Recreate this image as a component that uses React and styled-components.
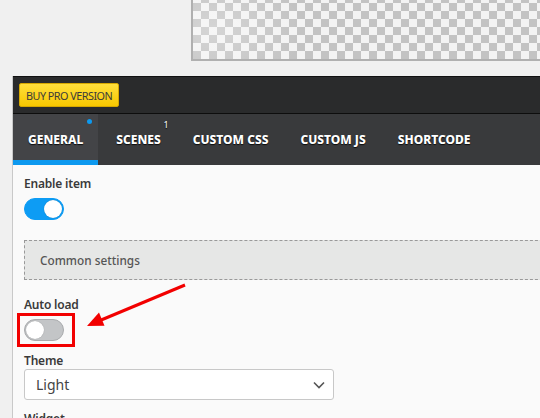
import React from "react";
import styled, { createGlobalStyle } from "styled-components";

const Global = createGlobalStyle`
  html, body { margin: 0; padding: 0; }
  body {
    background: #f0f0f0;
    width: 540px;
    height: 418px;
    overflow: hidden;
    font-family: "Noto Sans", "Open Sans", sans-serif;
    position: relative;
  }
`;

const Preview = styled.div`
  margin-left: 191px;
  width: 360px;
  height: 59px;
  border-left: 2px solid #b0b0b0;
  border-bottom: 2px solid #b0b0b0;
  background:
    radial-gradient(ellipse 90px 60px at 20px 30px, rgba(255,255,255,0.3), rgba(255,255,255,0)),
    repeating-conic-gradient(#c3c3c3 0 25%, #f3f3f3 0 50%) 0 -5px / 16px 16px;
`;

const Panel = styled.div`
  margin-top: 15px;
  margin-left: 12px;
  width: 560px;
  border-left: 1px solid #c9c9c9;
  background: #fafafa;
  min-height: 400px;
`;

const TopBar = styled.div`
  height: 36px;
  background: #2a2b2c;
  border-top: 1px solid #111;
  border-bottom: 1px solid #0d0d0d;
  display: flex;
  align-items: center;
  padding-left: 6px;
`;

const BuyButton = styled.button`
  height: 24px;
  padding: 0 6px;
  border: 1px solid #d7a900;
  border-radius: 2px;
  background: linear-gradient(to bottom, #ffdf3c, #f8c800);
  color: #3a3a3a;
  font-family: "Noto Sans", "Open Sans", sans-serif;
  font-size: 10.8px;
  letter-spacing: -0.5px;
  cursor: pointer;
`;

const TabBar = styled.div`
  height: 51px;
  background: #393a3c;
  display: flex;
  align-items: stretch;
`;

const Tab = styled.div`
  position: relative;
  display: flex;
  align-items: center;
  padding: 0 ${(p) => (p.$active ? "15px" : "16px")};
  margin-right: ${(p) => (p.$active ? "2px" : "0")};
  background: ${(p) => (p.$active ? "#434447" : "transparent")};
  border-bottom: 5px solid ${(p) => (p.$active ? "#0d99ef" : "transparent")};
  box-sizing: border-box;
  padding-top: 5px;
  color: #fff;
  font-family: "Noto Sans", "Open Sans", sans-serif;
  font-weight: 800;
  font-size: 12px;
  letter-spacing: 0;
  text-shadow: 0 1px 1px rgba(0,0,0,0.8);
`;

const Dot = styled.span`
  position: absolute;
  top: 5px;
  right: 6px;
  width: 5px;
  height: 5px;
  border-radius: 50%;
  background: #0d99ef;
`;

const Count = styled.span`
  position: absolute;
  top: 4px;
  right: 8px;
  font-size: 9px;
  font-weight: 400;
  color: #fff;
`;

const Content = styled.div`
  padding: 11px 0 0 11px;
`;

const Label = styled.div`
  font-size: 12px;
  font-weight: 600;
  color: #3a3a3a;
  line-height: 16px;
  letter-spacing: -0.2px;
  margin-bottom: ${(p) => p.$gap || 0}px;
`;

const ToggleWrap = styled.div`
  position: relative;
  width: 40px;
  margin-bottom: ${(p) => p.$gap || 0}px;
`;

const Toggle = styled.div`
  width: 40px;
  height: 22px;
  border-radius: 11px;
  box-sizing: border-box;
  background: ${(p) => (p.$on ? "#0d9cf4" : "#c3c5c7")};
  border: 1px solid ${(p) => (p.$on ? "#0d9cf4" : "#a9abad")};
  display: flex;
  align-items: center;
  justify-content: ${(p) => (p.$on ? "flex-end" : "flex-start")};
  padding: 0 1px;
`;

const Knob = styled.div`
  width: 18px;
  height: 18px;
  border-radius: 50%;
  background: #fff;
  box-shadow: 0 0 1px rgba(0,0,0,0.3);
`;

const Highlight = styled.span`
  position: absolute;
  left: -7px;
  top: -6px;
  width: 58px;
  height: 34px;
  box-sizing: border-box;
  border: 3px solid #f20000;
`;

const Section = styled.div`
  height: 40px;
  box-sizing: border-box;
  border: 1px dashed #999;
  border-right: none;
  background: #e6e7e6;
  display: flex;
  align-items: center;
  padding-left: 15px;
  font-size: 11.8px;
  font-weight: 500;
  color: #555;
  margin-bottom: 17px;
`;

const Select = styled.div`
  width: 310px;
  height: 31px;
  box-sizing: border-box;
  border: 1px solid #c8c8c8;
  border-radius: 3px;
  background: #fff;
  display: flex;
  align-items: center;
  justify-content: space-between;
  padding: 0 8px 0 11px;
  font-size: 14px;
  color: #444;
  margin-bottom: 11px;
`;

const Arrow = styled.svg`
  position: absolute;
  left: 0;
  top: 0;
  pointer-events: none;
`;

export default function App() {
  return (
    <>
      <Global />
      <Preview />
      <Panel>
        <TopBar>
          <BuyButton>BUY PRO VERSION</BuyButton>
        </TopBar>
        <TabBar>
          <Tab $active>
            GENERAL
            <Dot />
          </Tab>
          <Tab>
            SCENES
            <Count>1</Count>
          </Tab>
          <Tab>CUSTOM CSS</Tab>
          <Tab>CUSTOM JS</Tab>
          <Tab>SHORTCODE</Tab>
        </TabBar>
        <Content>
          <Label $gap={6}>Enable item</Label>
          <ToggleWrap $gap={20}>
            <Toggle $on>
              <Knob />
            </Toggle>
          </ToggleWrap>
          <Section>Common settings</Section>
          <Label $gap={6}>Auto load</Label>
          <ToggleWrap $gap={12}>
            <Toggle>
              <Knob />
            </Toggle>
            <Highlight />
          </ToggleWrap>
          <Label>Theme</Label>
          <Select>
            <span>Light</span>
            <svg width="12" height="8" viewBox="0 0 12 8">
              <path d="M1 1.5 L6 6.5 L11 1.5" fill="none" stroke="#555" strokeWidth="1.6" />
            </svg>
          </Select>
          <Label>Widget</Label>
        </Content>
      </Panel>
      <Arrow width="540" height="418" viewBox="0 0 540 418">
        <line x1="185" y1="285" x2="100" y2="320.5" stroke="#f20000" strokeWidth="3" />
        <polygon points="87,326 104.5,325.8 99,312.5" fill="#f20000" />
      </Arrow>
    </>
  );
}
